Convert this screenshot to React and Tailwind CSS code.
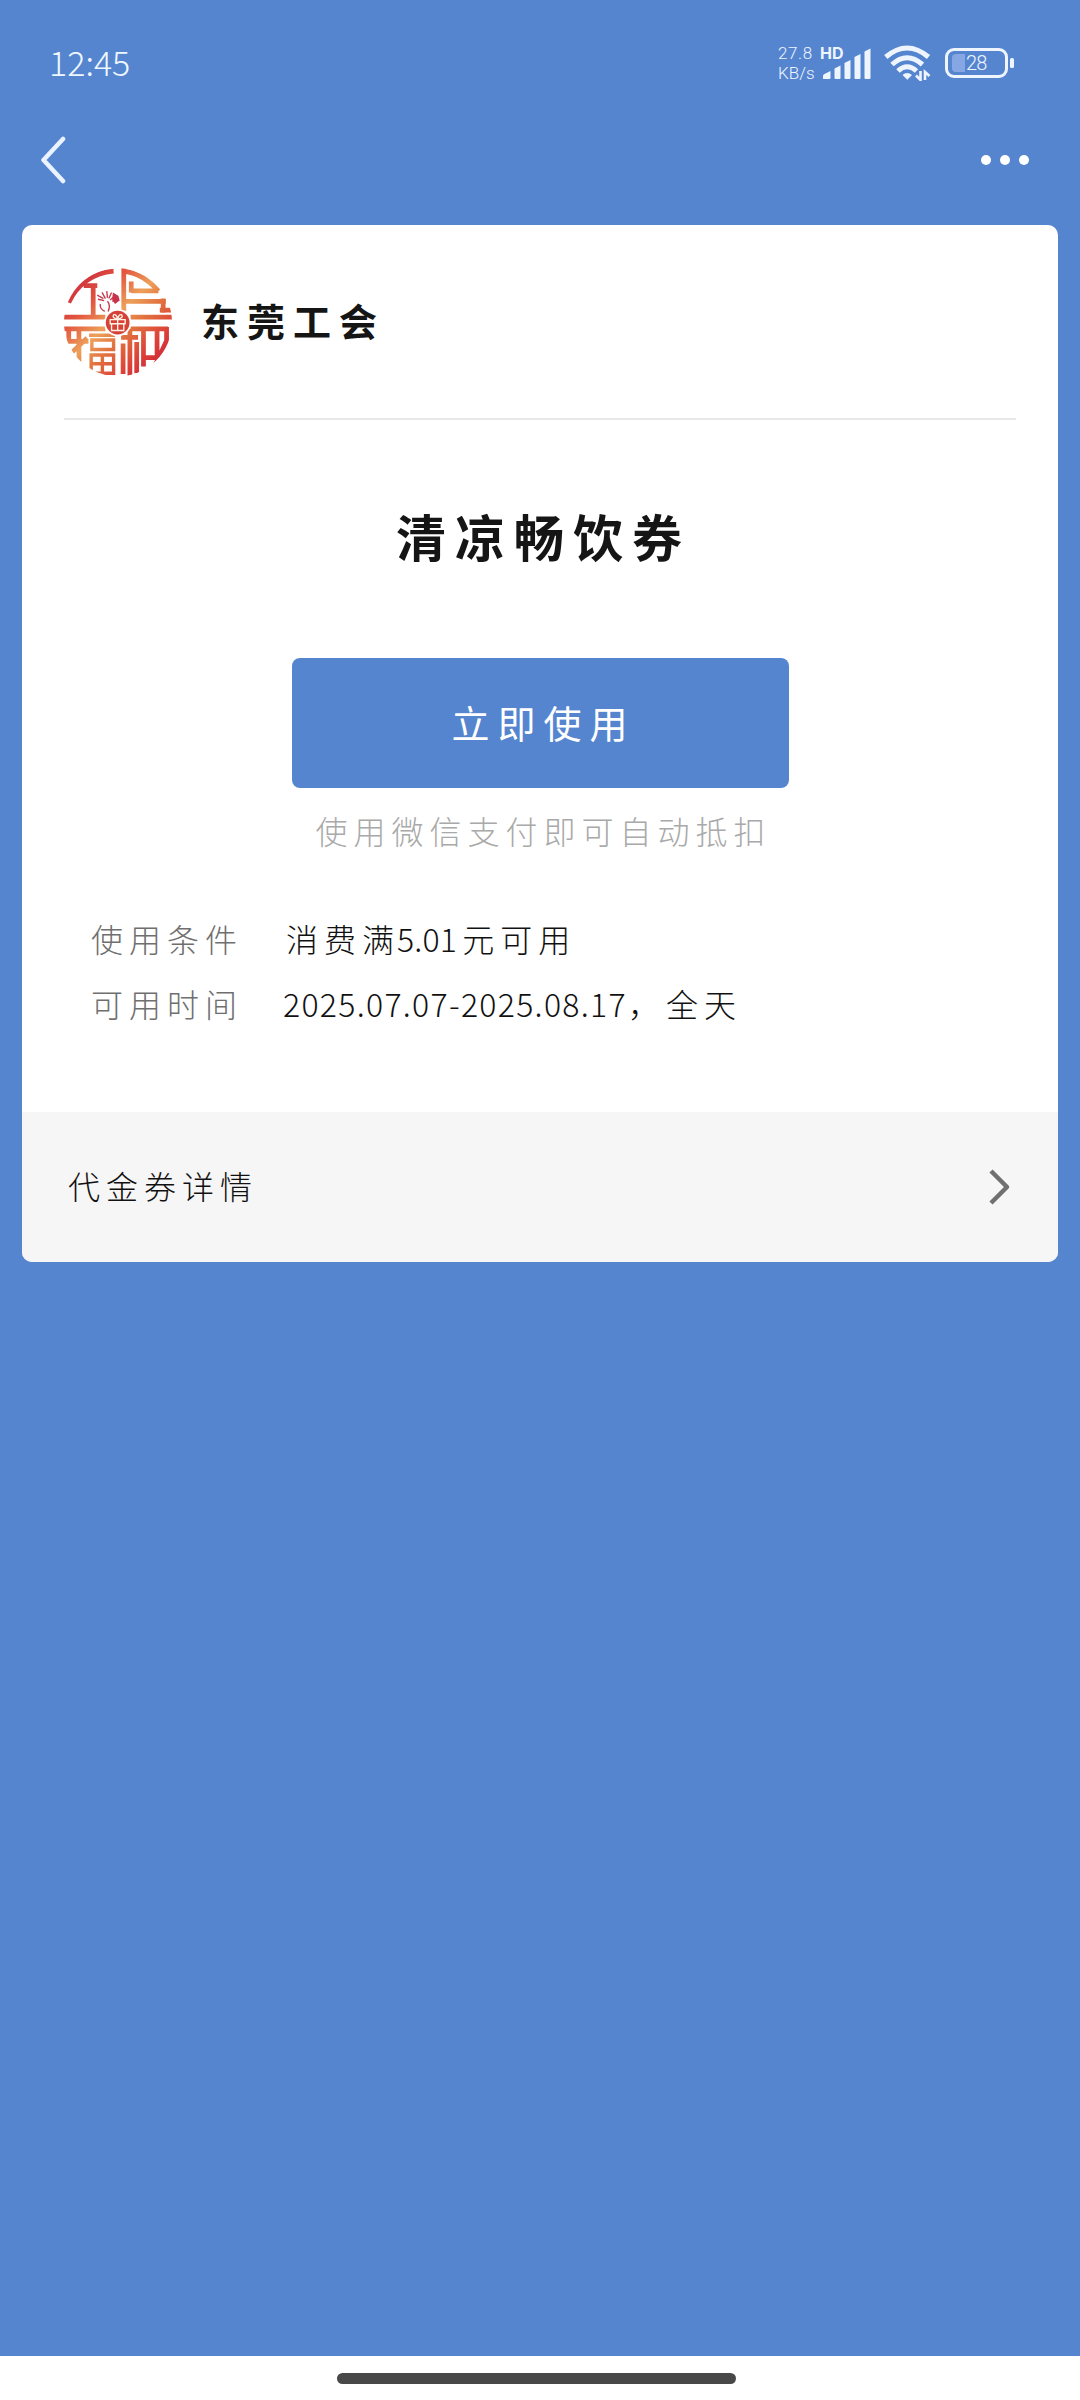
import clsx from 'clsx';

const details = [
    { label: '使用条件', value: ['消费满', '5.01', '元可用'] },
    { label: '可用时间', value: ['', '2025.07.07-2025.08.17', '，全天'] },
];

function SignalIcon() {
    return (
        <svg width="48" height="32" viewBox="0 0 48 32" fill="#eef5ff">
            <path d="M0 30.500V28q0-1.500 1.500-2L7.500 23v7q0 1-1 1H1q-1 0-1-.500z" />
            <path d="M11.500 20.500l6-3v12.500q0 1-1 1h-4q-1 0-1-1z" />
            <path d="M21.500 15l6-3V30q0 1-1 1h-4q-1 0-1-1z" />
            <path d="M31.500 9l6-3V30q0 1-1 1h-4q-1 0-1-1z" />
            <path d="M41.500 3.500l6-3V30q0 1-1 1h-4q-1 0-1-1z" />
        </svg>
    );
}

function WifiIcon() {
    return (
        <svg width="47" height="36" viewBox="0 0 47 36" fill="none" stroke="#eef5ff" strokeWidth="5">
            <path d="M1.800 12Q23 -6 44.500 12" />
            <path d="M8 19.500Q23 6 38.500 19.500" />
            <path d="M14 26Q23 17.500 32.500 26" />
            <path d="M18.500 30q4.500-4 9.500 0l-4.700 4.800z" fill="#eef5ff" stroke="none" />
            <path d="M36.500 26v9l-4.500-4.500M41 35v-8l4.500 4" strokeWidth="2.600" />
        </svg>
    );
}

function BatteryIcon() {
    return (
        <div className="flex items-center">
            <div className="flex h-[30px] w-[63px] items-center rounded-[9px] border-[3px] border-[#eef5ff] pl-[4px]">
                <div className="h-[18px] w-[13px] rounded-l-[4px] bg-[#86a6e4]" />
                <span className="ml-[1px] font-['Roboto'] text-[20px] leading-none font-light tracking-[-0.8px] text-[#eef5ff]">28</span>
            </div>
            <div className="ml-[2px] h-[10px] w-[4px] rounded-[1.5px] bg-[#eef5ff]" />
        </div>
    );
}

function UnionLogo() {
    return (
        <svg className="mt-[1px]" width="108" height="108" viewBox="44 40 318 318" fill="none">
            <defs>
                <linearGradient id="warm" gradientUnits="userSpaceOnUse" x1="70" y1="60" x2="340" y2="340">
                    <stop offset="0" stopColor="#c9243c" />
                    <stop offset=".25" stopColor="#e2553f" />
                    <stop offset=".45" stopColor="#eda05a" />
                    <stop offset=".6" stopColor="#e2733f" />
                    <stop offset=".8" stopColor="#dc4038" />
                    <stop offset="1" stopColor="#c8203a" />
                </linearGradient>
                <clipPath id="disc">
                    <circle cx="203" cy="200" r="159" />
                </clipPath>
            </defs>
            <g clipPath="url(#disc)" stroke="url(#warm)" strokeWidth="14">
                {/* top left */}
                <path d="M58 142A156 156 0 0 1 190 49" />
                <path d="M102 92H142M130 90V186M44 185H166" />
                {/* top right */}
                <path d="M220 40V166M220 49Q280 58 322 108M242 107H322M242 80V112M220 138H344M336 130V172M326 164H360M240 185H362" />
                {/* bottom left */}
                <path d="M44 219H166M58 219V262M88 226V345M50 256H116M66 290L112 246" />
                <path d="M118 238H194M126 252H190V280H126zM124 296H190V350H124zM157 296V350M124 322H190" strokeWidth="10" />
                {/* bottom right */}
                <path d="M212 244H262M238 219V360M240 219H350M218 262V352M258 258V350M278 222V330M278 304H324M318 226V306M346 214V276M346 254L306 340" />
            </g>
            {/* flower */}
            <path
                d="M164 168Q148 160 151 146M174 168Q182 150 172 138M144 132l18 4M142 120l18 10M156 112l10 18M170 108l2 20M184 112l-8 18M196 120l-16 14M204 134l-18 4"
                stroke="#c63a4b"
                strokeWidth="4"
            />
            <path d="M188 112l16 10 4 14-14 10-8-14z" fill="#c9304a" />
            <circle cx="202" cy="201" r="40" fill="#fff" />
            <circle cx="202" cy="201" r="35" fill="#d64238" />
            <path
                d="M180 192h44v12h-44zM184 204v20h36v-20M202 190v34M202 190q-18-2-12-12 8-4 12 12 4-16 12-12 6 10-12 12"
                stroke="#fff3e6"
                strokeWidth="4"
            />
        </svg>
    );
}

function StatusBar() {
    return (
        <div className="flex h-[126px] items-start justify-between pr-[66px] pl-[49px]">
            <span className="mt-[44px] text-[34px] leading-[36px] font-light text-[#eef7ff]">12:45</span>
            <div className="flex items-start">
                <div className="mt-[43px] w-[38px] font-['Roboto'] text-[17px] font-light text-[#eef5ff]">
                    <div className="h-[20px] leading-[20px] tracking-[0.6px]">27.8</div>
                    <div className="h-[20px] leading-[20px]">KB/s</div>
                </div>
                <div className="relative mt-[48px] ml-[7px]">
                    <SignalIcon />
                    <span className="absolute top-[-2px] left-[-3px] font-['Inter'] text-[16px] leading-[15px] font-bold text-[#eef5ff]">HD</span>
                </div>
                <div className="mt-[45px] ml-[13px]">
                    <WifiIcon />
                </div>
                <div className="mt-[48px] ml-[14px]">
                    <BatteryIcon />
                </div>
            </div>
        </div>
    );
}

function NavBar() {
    return (
        <div className="flex h-[99px] items-start justify-between pr-[51px] pl-[40px]">
            <svg className="mt-[10px]" width="27" height="48" viewBox="0 0 27 48" fill="none" stroke="#eaf3ff" strokeWidth="4.500" strokeLinecap="round" strokeLinejoin="round">
                <path d="M23 3L3.500 24L23 45" />
            </svg>
            <div className="mt-[29px] flex gap-[9px]">
                {[0, 1, 2].map((i) => (
                    <div key={i} className="size-[10px] rounded-full bg-white" />
                ))}
            </div>
        </div>
    );
}

function DetailRow({ label, value, wide }) {
    const [before, number, after] = value;

    return (
        <div className="flex h-[65px] items-center text-[32px] font-light whitespace-nowrap">
            <span className="w-[192px] tracking-[6px] text-[#6f6f6f]">{label}</span>
            <span className="flex items-center text-[#111]">
                {before && <span className="ml-[3px] tracking-[6px]">{before}</span>}
                <span className={clsx(wide ? 'tracking-[1.3px]' : 'ml-[-3px] tracking-[0.2px]')}>{number}</span>
                <span className={clsx('tracking-[6px]', wide ? 'ml-[1px]' : 'ml-[5px]')}>{after}</span>
            </span>
        </div>
    );
}

export default function App() {
    return (
        <div className="flex h-[2400px] w-[1080px] flex-col overflow-hidden bg-[#5685cf] font-['Noto_Sans_CJK_SC',sans-serif]">
            <StatusBar />
            <NavBar />

            <div className="mx-[22px] flex h-[1037px] flex-col overflow-hidden rounded-[10px] bg-white">
                <div className="mx-[42px] flex h-[195px] items-center border-b-2 border-[#e7e7e7]">
                    <UnionLogo />
                    <h1 className="mt-[-4px] ml-[29px] text-[38px] leading-none font-bold tracking-[8px] text-[#151515]">东莞工会</h1>
                </div>

                <div className="flex flex-1 flex-col items-center">
                    <h2 className="mt-[88px] ml-[7px] text-[50px] leading-[54px] font-bold tracking-[9px] text-[#151515]">清凉畅饮券</h2>
                    <button className="mt-[96px] h-[130px] w-[497px] rounded-[8px] bg-[#5685cf] pb-[4px] pl-[7px] text-[38px] tracking-[8px] text-white">
                        立即使用
                    </button>
                    <p className="mt-[22px] ml-[7px] text-[32px] leading-[40px] font-light tracking-[6px] text-[#a9a9a9]">使用微信支付即可自动抵扣</p>

                    <div className="mt-[55px] w-full pl-[69px]">
                        {details.map((item, i) => (
                            <DetailRow key={item.label} label={item.label} value={item.value} wide={i === 1} />
                        ))}
                    </div>
                </div>

                <div className="flex h-[150px] items-center justify-between bg-[#f6f6f6] pr-[47px] pl-[46px]">
                    <span className="mt-[-4px] text-[32px] leading-none font-light tracking-[6px] text-[#111]">代金券详情</span>
                    <svg width="22" height="36" viewBox="0 0 22 36" fill="none" stroke="#707070" strokeWidth="4.500" strokeLinejoin="round">
                        <path d="M2 2L18 18L2 34" />
                    </svg>
                </div>
            </div>

            <div className="mt-auto flex h-[44px] items-start justify-center bg-white pt-[17px] pr-[7px]">
                <div className="h-[11px] w-[399px] rounded-full bg-[#484848]" />
            </div>
        </div>
    );
}
